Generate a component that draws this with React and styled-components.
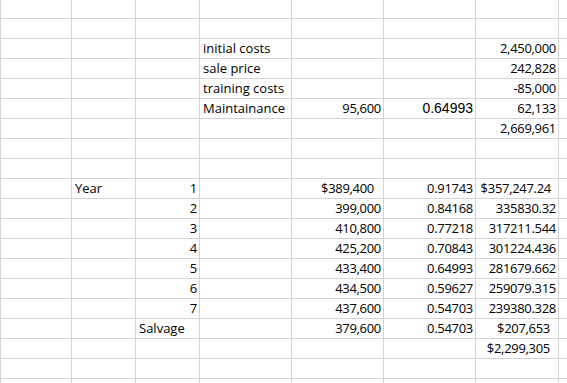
import React from "react";
import styled, { createGlobalStyle } from "styled-components";

const GlobalStyle = createGlobalStyle`
  html, body {
    margin: 0;
    padding: 0;
    background: #ffffff;
    overflow: hidden;
  }
`;

const COLS = 8;
const ROWS = 20;

// r = grid row, c = grid column, pad = extra right padding (currency formats)
const cells = [
  { r: 2, c: 3, text: "initial costs", align: "left" },
  { r: 2, c: 6, text: "2,450,000" },
  { r: 3, c: 3, text: "sale price", align: "left" },
  { r: 3, c: 6, text: "242,828" },
  { r: 4, c: 3, text: "training costs", align: "left" },
  { r: 4, c: 6, text: "-85,000" },
  { r: 5, c: 3, text: "Maintainance", align: "left" },
  { r: 5, c: 4, text: "95,600" },
  { r: 5, c: 5, text: "0.64993", arial: true },
  { r: 5, c: 6, text: "62,133" },
  { r: 6, c: 6, text: "2,669,961" },

  { r: 9, c: 1, text: "Year", align: "left" },
  { r: 9, c: 2, text: "1" },
  { r: 9, c: 4, text: "$389,400", pad: 7 },
  { r: 9, c: 5, text: "0.91743" },
  { r: 9, c: 6, text: "$357,247.24", pad: 5 },
  { r: 10, c: 2, text: "2" },
  { r: 10, c: 4, text: "399,000" },
  { r: 10, c: 5, text: "0.84168" },
  { r: 10, c: 6, text: "335830.32" },
  { r: 11, c: 2, text: "3" },
  { r: 11, c: 4, text: "410,800" },
  { r: 11, c: 5, text: "0.77218" },
  { r: 11, c: 6, text: "317211.544" },
  { r: 12, c: 2, text: "4" },
  { r: 12, c: 4, text: "425,200" },
  { r: 12, c: 5, text: "0.70843" },
  { r: 12, c: 6, text: "301224.436" },
  { r: 13, c: 2, text: "5" },
  { r: 13, c: 4, text: "433,400" },
  { r: 13, c: 5, text: "0.64993" },
  { r: 13, c: 6, text: "281679.662" },
  { r: 14, c: 2, text: "6" },
  { r: 14, c: 4, text: "434,500" },
  { r: 14, c: 5, text: "0.59627" },
  { r: 14, c: 6, text: "259079.315" },
  { r: 15, c: 2, text: "7" },
  { r: 15, c: 4, text: "437,600" },
  { r: 15, c: 5, text: "0.54703" },
  { r: 15, c: 6, text: "239380.328" },
  { r: 16, c: 2, text: "Salvage", align: "left" },
  { r: 16, c: 4, text: "379,600" },
  { r: 16, c: 5, text: "0.54703" },
  { r: 16, c: 6, text: "$207,653", pad: 6 },
  { r: 17, c: 6, text: "$2,299,305", pad: 6 },
];

function App() {
  const lookup = {};
  cells.forEach((cell) => {
    lookup[`${cell.r}-${cell.c}`] = cell;
  });

  const grid = [];
  for (let r = 0; r < ROWS; r++) {
    for (let c = 0; c < COLS; c++) {
      const cell = lookup[`${r}-${c}`];
      grid.push(
        <Cell
          key={`${r}-${c}`}
          $align={cell ? cell.align || "right" : "right"}
          $arial={cell && cell.arial}
          $pad={cell && cell.pad ? cell.pad : 0}
        >
          {cell ? cell.text : ""}
        </Cell>
      );
    }
  }

  return (
    <>
      <GlobalStyle />
      <Sheet>{grid}</Sheet>
    </>
  );
}

const Sheet = styled.div`
  display: grid;
  grid-template-columns: 70px 63px 63px 91px 91px 91px 82px 1fr;
  grid-template-rows: 18px repeat(18, 19px) 1fr;
  gap: 1px;
  width: 567px;
  height: 383px;
  box-sizing: border-box;
  padding-left: 1px;
  background: #d4d4d4;
  overflow: hidden;
`;

const Cell = styled.div`
  background: #ffffff;
  display: flex;
  align-items: flex-end;
  justify-content: ${(p) => (p.$align === "left" ? "flex-start" : "flex-end")};
  padding: 0 ${(p) => 2 + p.$pad}px 1px 3px;
  font-family: ${(p) =>
    p.$arial ? '"Liberation Sans", Arial, sans-serif' : '"Open Sans", Lato, sans-serif'};
  font-size: ${(p) => (p.$arial ? "14px" : "13px")};
  letter-spacing: ${(p) => (p.$arial || p.$align === "left" ? "0" : "-0.3px")};
  line-height: 17px;
  color: #000000;
  white-space: nowrap;
  overflow: visible;
  min-width: 0;
`;

export default App;
